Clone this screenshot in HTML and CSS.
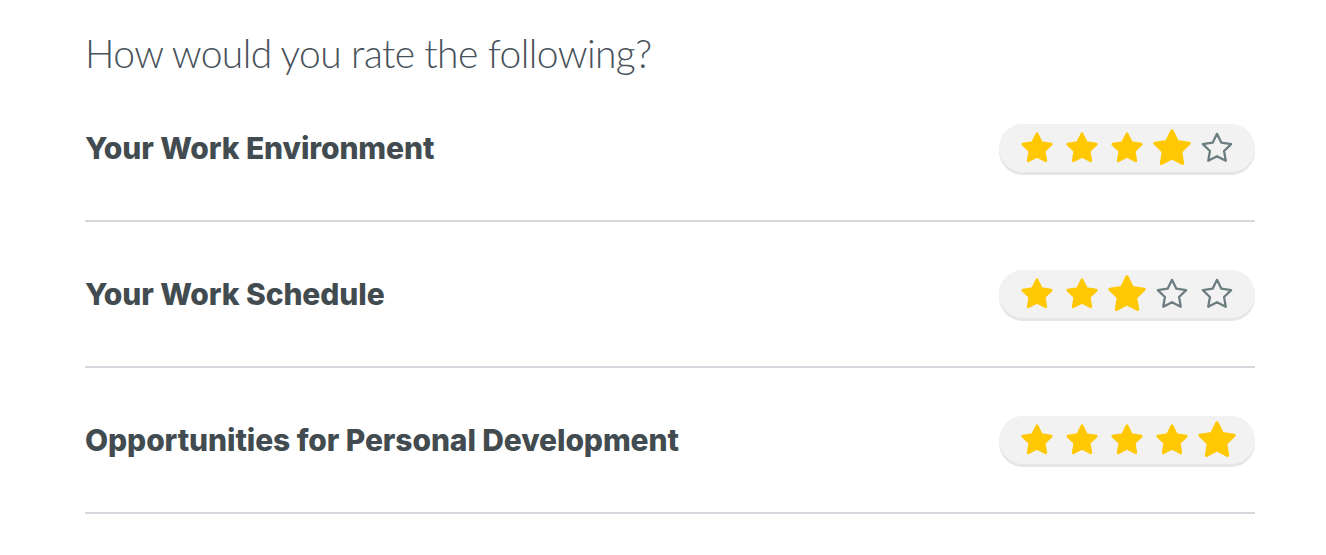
FILE: index.html
```html
<!DOCTYPE html>
<html>
<head>
<meta charset="utf-8">
<link rel="stylesheet" href="styles.css">
</head>
<body>
<svg width="0" height="0" class="defs">
  <defs>
    <path id="star" d="M12 2l3.09 6.26L22 9.27l-5 4.87 1.18 6.88L12 17.770l-6.18 3.25L7 14.14 2 9.27l6.91-1.01L12 2z"/>
  </defs>
</svg>
<main class="survey">
  <h1 class="title">How would you rate the following?</h1>
  <div class="row">
    <span class="label">Your Work Environment</span>
    <div class="rating">
      <svg class="star on" viewBox="0 0 24 24"><use href="#star"/></svg>
      <svg class="star on" viewBox="0 0 24 24"><use href="#star"/></svg>
      <svg class="star on" viewBox="0 0 24 24"><use href="#star"/></svg>
      <svg class="star on big" viewBox="0 0 24 24"><use href="#star"/></svg>
      <svg class="star off" viewBox="0 0 24 24"><use href="#star"/></svg>
    </div>
  </div>
  <div class="row">
    <span class="label">Your Work Schedule</span>
    <div class="rating">
      <svg class="star on" viewBox="0 0 24 24"><use href="#star"/></svg>
      <svg class="star on" viewBox="0 0 24 24"><use href="#star"/></svg>
      <svg class="star on big" viewBox="0 0 24 24"><use href="#star"/></svg>
      <svg class="star off" viewBox="0 0 24 24"><use href="#star"/></svg>
      <svg class="star off" viewBox="0 0 24 24"><use href="#star"/></svg>
    </div>
  </div>
  <div class="row">
    <span class="label">Opportunities for Personal Development</span>
    <div class="rating">
      <svg class="star on" viewBox="0 0 24 24"><use href="#star"/></svg>
      <svg class="star on" viewBox="0 0 24 24"><use href="#star"/></svg>
      <svg class="star on" viewBox="0 0 24 24"><use href="#star"/></svg>
      <svg class="star on" viewBox="0 0 24 24"><use href="#star"/></svg>
      <svg class="star on big" viewBox="0 0 24 24"><use href="#star"/></svg>
    </div>
  </div>
</main>
</body>
</html>
```
FILE: styles.css
```css
html, body {
  margin: 0;
  padding: 0;
  background: #ffffff;
}
.defs {
  position: absolute;
  width: 0;
  height: 0;
}
.survey {
  width: 1170px;
  margin-left: 85px;
  padding-top: 28px;
  font-family: "Lato", "Noto Sans", sans-serif;
  color: #424c50;
}
.title {
  margin: 0;
  font-weight: 300;
  font-size: 39px;
  letter-spacing: -0.6px;
  line-height: 50px;
  color: #48525a;
  height: 48px;
}
.row {
  display: flex;
  align-items: center;
  justify-content: space-between;
  height: 144px;
  border-bottom: 2px solid #d5d9dd;
}
.label {
  font-family: "Inter", "Lato", sans-serif;
  font-weight: 800;
  font-size: 30px;
  letter-spacing: -0.1px;
  color: #424c50;
}
.rating {
  display: flex;
  align-items: center;
  gap: 11px;
  height: 48px;
  padding: 0 21px;
  border-radius: 24px;
  background: #f2f2f2;
  box-shadow: 0 3px 0 #e6e6e6;
}
.star {
  width: 34px;
  height: 34px;
}
.star use {
  stroke-linejoin: round;
  stroke-width: 2;
}
.star.on use {
  fill: #ffc800;
  stroke: #ffc800;
}
.star.off use {
  fill: none;
  stroke: #6b7d80;
  stroke-width: 1.6;
}
.star.big {
  transform: scale(1.2);
}
```
